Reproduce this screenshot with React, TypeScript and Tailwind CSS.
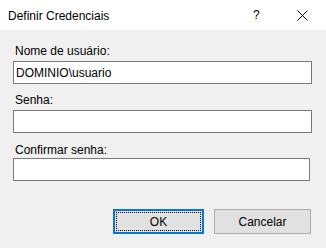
export default function App() {
  return (
    <div
      className="w-[326px] h-[248px] bg-[#f0f0f0] text-black text-[12px] leading-[16px] flex flex-col overflow-hidden"
      style={{ fontFamily: '"Liberation Sans", Arial, sans-serif' }}
    >
      {/* title bar */}
      <div className="h-[30px] bg-white flex items-center relative">
        <span className="ml-[8px] mt-[1px]">Definir Credenciais</span>
        <span className="absolute left-[253px] top-[7px] text-[12px]">?</span>
        <svg className="absolute left-[297px] top-[10px]" width="11" height="11" viewBox="0 0 11 11">
          <path d="M0.5 0.5 L10.5 10.5 M10.5 0.5 L0.5 10.5" stroke="#000" strokeWidth="1" fill="none" />
        </svg>
      </div>

      <div className="flex flex-col pl-[13px]">
        <label className="mt-[13px] ml-[2px]">Nome de usuário:</label>
        <div className="mt-[2px] w-[299px] h-[23px] bg-white border border-[#7a7a7a] flex items-center pl-[2px]">
          DOMINIO\usuario
        </div>

        <label className="mt-[8px] ml-[2px]">Senha:</label>
        <div className="mt-[2px] w-[299px] h-[23px] bg-white border border-[#7a7a7a]" />

        <label className="mt-[9px] ml-[2px]">Confirmar senha:</label>
        <div className="mt-[0px] w-[297px] h-[23px] bg-white border border-[#7a7a7a]" />
      </div>

      <div className="flex justify-end gap-[10px] pr-[15px] mt-[28px]">
        <button className="w-[91px] h-[25px] bg-[#e1e1e1] border-2 border-[#0078d7] p-[1px] flex">
          <span className="flex-1 border border-dotted border-black flex items-center justify-center">OK</span>
        </button>
        <button className="w-[97px] h-[25px] bg-[#e1e1e1] border border-[#adadad] flex items-center justify-center">
          Cancelar
        </button>
      </div>
    </div>
  )
}
